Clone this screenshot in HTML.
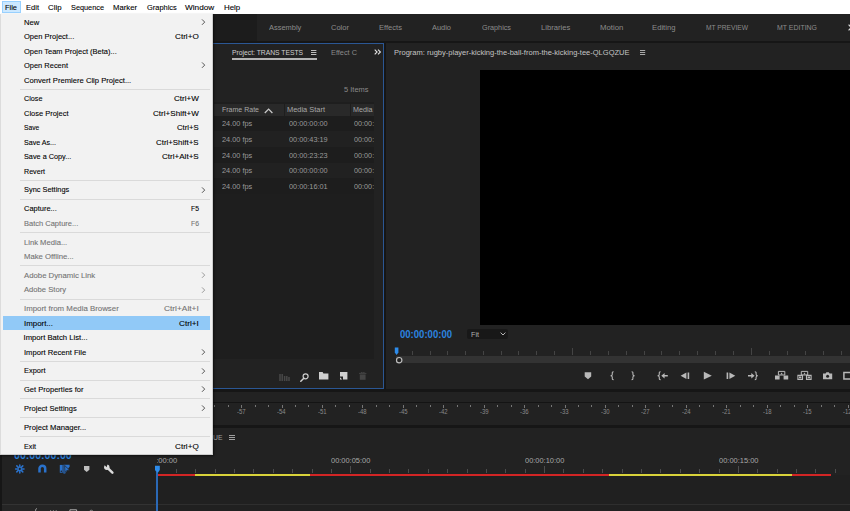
<!DOCTYPE html>
<html><head><meta charset="utf-8"><title>Premiere Pro - File menu</title>
<style>
html,body{margin:0;padding:0;}
body{width:850px;height:511px;overflow:hidden;position:relative;background:#161616;font-family:"Liberation Sans",sans-serif;}
div,span,svg,i{position:absolute;display:block;}
.t{white-space:nowrap;line-height:12px;height:12px;transform-origin:0 50%;}
#stage{left:0;top:0;width:850px;height:511px;overflow:hidden;}
/* menu bar */
#menubar{left:0;top:0;width:850px;height:14px;background:#fff;}
#filehl{left:1.5px;top:0.5px;width:19px;height:12.7px;background:#cce8ff;border:1px solid #99d1ff;box-sizing:border-box;}
/* dropdown */
#menu{left:0;top:14px;width:212.5px;height:440.8px;background:#f2f2f2;box-shadow:inset -1px -1px 0 #cdcdcd, inset 1px 0 0 #dcdcdc, 1px 1px 2px rgba(0,0,0,.55);}
#menu .sep{left:20px;width:189.5px;height:1px;background:#dadada;}
#menu .chev{left:200.6px;}
#menu .t,#menubar .t{-webkit-text-stroke:0.1px currentColor;}
#hl{left:2.5px;top:301.8px;width:207.7px;height:14.3px;background:#91c9f7;}
/* workspace */
#wsbar{left:0;top:14px;width:850px;height:26.7px;background:#222;}
#wsleft{left:0;top:0;width:257px;height:26.7px;background:#1c1c1c;}
/* project panel */
#proj{left:200px;top:42.5px;width:184px;height:346.5px;background:#222;border:1px solid #2b5794;box-sizing:border-box;}
#listbg{left:214px;top:102px;width:160px;height:256.5px;background:#1e1e1e;overflow:hidden;}
#listbg .hdr{left:0;top:1.6px;width:160px;height:12.1px;background:#292929;}
#listbg .row{left:0;width:160px;height:15.65px;}
#listbg .vs{top:1.6px;width:1px;height:12.1px;background:#1e1e1e;}
/* program */
#prog{left:385.7px;top:42.5px;width:470px;height:346.3px;background:#222;}
#video{left:479.7px;top:69.6px;width:380px;height:255.6px;background:#000;}
#fit{left:467px;top:329.3px;width:41px;height:9.8px;background:#181818;border-radius:2px;}
#scroll{left:396px;top:356.4px;width:460px;height:7px;background:#333;}
#ptk i{width:1px;background:#444;}
/* meter */
#meter{left:0;top:392.3px;width:850px;height:32.5px;background:#222;}
#meterline{left:0;top:401.6px;width:850px;height:1.6px;background:#141414;}
#mtk i{top:404.5px;width:1px;background:#767676;}
/* timeline */
#tl{left:0;top:427.5px;width:850px;height:84px;background:#222;}
#tracks{left:157px;top:475px;width:700px;height:40px;background:#202020;}
#tlclip{left:156.5px;top:450px;width:700px;height:30px;overflow:hidden;}
#ttk i{width:1px;background:#4c4c4c;}
.bar{top:473.5px;height:2px;}
</style></head>
<body>
<div id="stage">

<!-- ===== dark application UI ===== -->
<div id="wsbar"><div id="wsleft"></div></div>

<div id="proj"></div>
<div style="left:231.5px;top:58.2px;width:85px;height:1.6px;background:#b4b4b4"></div>
<svg style="left:311px;top:50px" width="6" height="6" viewBox="0 0 6 6"><path d="M0 .5H5.4M0 2.5H5.4M0 4.5H5.4" stroke="#bdbdbd" stroke-width="1"/></svg>
<svg style="left:373.6px;top:48.8px" width="8" height="7" viewBox="0 0 8 7"><path d="M.7 .7 L3.1 3 L.7 5.3M4 .7 L6.4 3 L4 5.3" fill="none" stroke="#e4e4e4" stroke-width="1.1"/></svg>
<div id="listbg">
  <div class="hdr"></div>
  <div class="row" style="top:13.60px;background:#1d1d1d"></div><div class="row" style="top:29.25px;background:#212121"></div><div class="row" style="top:44.90px;background:#1d1d1d"></div><div class="row" style="top:60.55px;background:#212121"></div><div class="row" style="top:76.20px;background:#1d1d1d"></div>
  <div class="vs" style="left:70px"></div><div class="vs" style="left:135.5px"></div>
  <svg style="left:50.4px;top:6.3px" width="10" height="6" viewBox="0 0 10 6"><path d="M.8 5 L4.6 1.1 L8.4 5" fill="none" stroke="#c8c8c8" stroke-width="1.3"/></svg>
  <span class="t" id="t59" style="left:8.00px;top:1.80px;font-size:7.6px;color:#a8a8a8;transform:scaleX(0.9228);">Frame Rate</span>
<span class="t" id="t60" style="left:73.00px;top:1.80px;font-size:7.6px;color:#a8a8a8;transform:scaleX(0.9783);">Media Start</span>
<span class="t" id="t61" style="left:138.50px;top:1.80px;font-size:7.6px;color:#a8a8a8;transform:scaleX(0.9426);">Media</span>
<span class="t" id="t62" style="left:8.40px;top:15.80px;font-size:7.6px;color:#9a9a9a;transform:scaleX(0.9664);">24.00 fps</span>
<span class="t" id="t63" style="left:75.30px;top:15.80px;font-size:7.6px;color:#9a9a9a;transform:scaleX(0.9645);">00:00:00:00</span>
<span class="t" id="t64" style="left:140.40px;top:15.80px;font-size:7.6px;color:#9a9a9a;transform:scaleX(0.9539);">00:00:00</span>
<span class="t" id="t65" style="left:8.40px;top:31.80px;font-size:7.6px;color:#9a9a9a;transform:scaleX(0.9664);">24.00 fps</span>
<span class="t" id="t66" style="left:75.30px;top:31.80px;font-size:7.6px;color:#9a9a9a;transform:scaleX(0.9645);">00:00:43:19</span>
<span class="t" id="t67" style="left:140.40px;top:31.80px;font-size:7.6px;color:#9a9a9a;transform:scaleX(0.9539);">00:00:00</span>
<span class="t" id="t68" style="left:8.40px;top:47.80px;font-size:7.6px;color:#9a9a9a;transform:scaleX(0.9664);">24.00 fps</span>
<span class="t" id="t69" style="left:75.30px;top:47.80px;font-size:7.6px;color:#9a9a9a;transform:scaleX(0.9645);">00:00:23:23</span>
<span class="t" id="t70" style="left:140.40px;top:47.80px;font-size:7.6px;color:#9a9a9a;transform:scaleX(0.9539);">00:00:00</span>
<span class="t" id="t71" style="left:8.40px;top:62.80px;font-size:7.6px;color:#9a9a9a;transform:scaleX(0.9664);">24.00 fps</span>
<span class="t" id="t72" style="left:75.30px;top:62.80px;font-size:7.6px;color:#9a9a9a;transform:scaleX(0.9645);">00:00:00:00</span>
<span class="t" id="t73" style="left:140.40px;top:62.80px;font-size:7.6px;color:#9a9a9a;transform:scaleX(0.9539);">00:00:00</span>
<span class="t" id="t74" style="left:8.40px;top:78.80px;font-size:7.6px;color:#9a9a9a;transform:scaleX(0.9664);">24.00 fps</span>
<span class="t" id="t75" style="left:75.30px;top:78.80px;font-size:7.6px;color:#9a9a9a;transform:scaleX(0.9645);">00:00:16:01</span>
<span class="t" id="t76" style="left:140.40px;top:78.80px;font-size:7.6px;color:#9a9a9a;transform:scaleX(0.9539);">00:00:00</span>
</div>
<!-- project footer icons -->
<svg style="left:278.5px;top:373.5px" width="12" height="7" viewBox="0 0 12 7"><path d="M1 0V7M3.2 0V7M5.6 2V7M7.8 2V7M10 3V7" stroke="#484848" stroke-width="1.5"/></svg>
<svg style="left:299.5px;top:372.5px" width="9" height="9" viewBox="0 0 9 9"><circle cx="5.6" cy="3.3" r="2.5" fill="none" stroke="#cfcfcf" stroke-width="1.2"/><path d="M3.8 5.2 L.8 8.2" stroke="#cfcfcf" stroke-width="1.5" stroke-linecap="round"/></svg>
<svg style="left:318.7px;top:372.3px" width="10" height="8" viewBox="0 0 10 8"><path d="M0 0H3.6L4.4 1.4H9.4V7.4H0Z" fill="#cfcfcf"/></svg>
<svg style="left:339.7px;top:372.3px" width="8" height="8" viewBox="0 0 8 8"><path d="M0 0H7.4V7.4H3V4.4H0Z" fill="#cfcfcf"/><path d="M0 5.2L2.2 7.4H0Z" fill="#cfcfcf"/></svg>
<svg style="left:358.8px;top:372.3px" width="8" height="8" viewBox="0 0 8 8"><path d="M0 1.4H7.4M2.4 1V0H5V1" stroke="#444" stroke-width="1" fill="none"/><path d="M.8 2.4H6.6V7.8H.8Z" fill="#444"/></svg>

<div id="prog"></div>
<svg style="left:640px;top:50px" width="6" height="6" viewBox="0 0 6 6"><path d="M0 .5H5.2M0 2.5H5.2M0 4.5H5.2" stroke="#a8a8a8" stroke-width="1"/></svg>
<div id="video"></div>
<svg style="left:848.4px;top:23.6px" width="4" height="7" viewBox="0 0 4 7"><path d="M.6 .6L3.2 3.5L.6 6.4" fill="none" stroke="#e0e0e0" stroke-width="1.1"/></svg>
<div id="fit"></div>
<svg style="left:499.5px;top:332.3px" width="6" height="4" viewBox="0 0 6 4"><path d="M.6 .6 L3 3 L5.4 .6" fill="none" stroke="#b8b8b8" stroke-width="1"/></svg>
<div id="ptk"><i style="left:411.78px;top:351.2px;height:4.3px"></i><i style="left:429.56px;top:351.2px;height:4.3px"></i><i style="left:447.34px;top:351.2px;height:4.3px"></i><i style="left:465.12px;top:351.2px;height:4.3px"></i><i style="left:482.90px;top:351.2px;height:4.3px"></i><i style="left:500.68px;top:351.2px;height:4.3px"></i><i style="left:518.46px;top:351.2px;height:4.3px"></i><i style="left:536.24px;top:351.2px;height:4.3px"></i><i style="left:554.02px;top:351.2px;height:4.3px"></i><i style="left:571.80px;top:348.3px;height:7.2px"></i><i style="left:589.73px;top:351.2px;height:4.3px"></i><i style="left:607.66px;top:351.2px;height:4.3px"></i><i style="left:625.59px;top:351.2px;height:4.3px"></i><i style="left:643.52px;top:351.2px;height:4.3px"></i><i style="left:661.45px;top:351.2px;height:4.3px"></i><i style="left:679.38px;top:351.2px;height:4.3px"></i><i style="left:697.31px;top:351.2px;height:4.3px"></i><i style="left:715.24px;top:351.2px;height:4.3px"></i><i style="left:733.17px;top:351.2px;height:4.3px"></i><i style="left:751.10px;top:348.3px;height:7.2px"></i><i style="left:769.03px;top:351.2px;height:4.3px"></i><i style="left:786.96px;top:351.2px;height:4.3px"></i><i style="left:804.89px;top:351.2px;height:4.3px"></i><i style="left:822.82px;top:351.2px;height:4.3px"></i><i style="left:840.75px;top:351.2px;height:4.3px"></i><i style="left:858.68px;top:351.2px;height:4.3px"></i></div>
<div id="scroll"></div>
<svg style="left:393.6px;top:346.6px" width="6" height="9" viewBox="0 0 6 9"><path d="M.8 .4H4.4V5.6L2.6 8L.8 5.6Z" fill="#2d8ceb"/></svg>
<svg style="left:394.5px;top:356px" width="9" height="9" viewBox="0 0 9 9"><circle cx="4.2" cy="4.2" r="2.7" fill="#222" stroke="#bdbdbd" stroke-width="1.2"/></svg>
<!-- transport -->
<svg style="left:580px;top:369px" width="270" height="14" viewBox="580 369 270 14" fill="#b8b8b8" stroke="none">
  <path d="M584.7 372.3H591.2V376.6L588 379.2L584.7 376.6Z"/>
  <path d="M613.6 371.8C612 371.8 612.3 372.6 612.3 374.2C612.3 375.2 611.6 375.6 610.6 375.7C611.6 375.8 612.3 376.2 612.3 377.2C612.3 378.8 612 379.6 613.6 379.6" fill="none" stroke="#b8b8b8" stroke-width="1.1"/>
  <path d="M631.6 371.8C633.2 371.8 632.9 372.6 632.9 374.2C632.9 375.2 633.6 375.6 634.6 375.7C633.6 375.8 632.9 376.2 632.9 377.2C632.9 378.8 633.2 379.6 631.6 379.6" fill="none" stroke="#b8b8b8" stroke-width="1.1"/>
  <path d="M660.6 371.8C659 371.8 659.3 372.6 659.3 374.2C659.3 375.2 658.6 375.6 657.6 375.7C658.6 375.8 659.3 376.2 659.3 377.2C659.3 378.8 659 379.6 660.6 379.6" fill="none" stroke="#b8b8b8" stroke-width="1.1"/>
  <path d="M661.3 375.7L664.6 373V375H667.8V376.4H664.6V378.4Z"/>
  <path d="M680.6 375.7L686.4 372.4V379Z M687.6 372.4H689.2V379H687.6Z"/>
  <path d="M703.8 371.8L711.8 375.7L703.8 379.6Z"/>
  <path d="M726.6 372.4H728.2V379H726.6Z M729.4 372.4L735.3 375.7L729.4 379Z"/>
  <path d="M754.8 371.8C756.4 371.8 756.1 372.6 756.1 374.2C756.1 375.2 756.8 375.6 757.8 375.7C756.8 375.8 756.1 376.2 756.1 377.2C756.1 378.8 756.4 379.6 754.8 379.6" fill="none" stroke="#b8b8b8" stroke-width="1.1"/>
  <path d="M754.6 375.7L751.3 373V375H748V376.4H751.3V378.4Z"/>
  <!-- lift -->
  <path d="M775 375.4H779.6V379.4H775Z M783.6 375.4H788.2V379.4H783.6Z"/>
  <path d="M778.4 371.4H784.8V375H778.4Z" fill="none" stroke="#b8b8b8" stroke-width="1"/>
  <path d="M780.4 374.4L781.6 372.4L782.8 374.4Z"/>
  <!-- extract -->
  <path d="M797.9 375.4H802.5V379.4H797.9Z M806.5 375.4H811.1V379.4H806.5Z" fill="none" stroke="#b8b8b8" stroke-width="1.1"/>
  <path d="M801.3 371.4H807.7V375H801.3Z" fill="none" stroke="#b8b8b8" stroke-width="1"/>
  <path d="M803.3 374.4L804.5 372.4L805.7 374.4Z"/>
  <path d="M799 376.6H801.4V378.2H799Z M807.6 376.6H810V378.2H807.6Z"/>
  <!-- camera -->
  <path d="M823 373.4H825.6L826.4 372.2H828.8L829.6 373.4H832.2V379.2H823Z"/>
  <circle cx="827.6" cy="376.2" r="1.5" fill="#222"/>
  <path d="M843.9 372.6H851V379H843.9Z" fill="none" stroke="#b8b8b8" stroke-width="1.5"/>
</svg>

<!-- audio meter strip -->
<div id="meter"></div>
<div id="meterline"></div>
<div id="mtk"><i style="left:214.15px;height:2px"></i><i style="left:227.62px;height:2px"></i><i style="left:241.10px;height:3px"></i><i style="left:254.58px;height:2px"></i><i style="left:268.05px;height:2px"></i><i style="left:281.53px;height:3px"></i><i style="left:295.01px;height:2px"></i><i style="left:308.48px;height:2px"></i><i style="left:321.96px;height:3px"></i><i style="left:335.44px;height:2px"></i><i style="left:348.91px;height:2px"></i><i style="left:362.39px;height:3px"></i><i style="left:375.87px;height:2px"></i><i style="left:389.34px;height:2px"></i><i style="left:402.82px;height:3px"></i><i style="left:416.30px;height:2px"></i><i style="left:429.77px;height:2px"></i><i style="left:443.25px;height:3px"></i><i style="left:456.73px;height:2px"></i><i style="left:470.20px;height:2px"></i><i style="left:483.68px;height:3px"></i><i style="left:497.16px;height:2px"></i><i style="left:510.63px;height:2px"></i><i style="left:524.11px;height:3px"></i><i style="left:537.59px;height:2px"></i><i style="left:551.06px;height:2px"></i><i style="left:564.54px;height:3px"></i><i style="left:578.02px;height:2px"></i><i style="left:591.49px;height:2px"></i><i style="left:604.97px;height:3px"></i><i style="left:618.45px;height:2px"></i><i style="left:631.92px;height:2px"></i><i style="left:645.40px;height:3px"></i><i style="left:658.88px;height:2px"></i><i style="left:672.35px;height:2px"></i><i style="left:685.83px;height:3px"></i><i style="left:699.31px;height:2px"></i><i style="left:712.78px;height:2px"></i><i style="left:726.26px;height:3px"></i><i style="left:739.74px;height:2px"></i><i style="left:753.21px;height:2px"></i><i style="left:766.69px;height:3px"></i><i style="left:780.17px;height:2px"></i><i style="left:793.64px;height:2px"></i><i style="left:807.12px;height:3px"></i><i style="left:820.60px;height:2px"></i><i style="left:834.07px;height:2px"></i><i style="left:847.55px;height:3px"></i></div>

<!-- timeline -->
<div id="tl"></div>
<div id="tracks"></div>
<div style="left:0;top:503.5px;width:157px;height:1px;background:#333"></div>
<div style="left:0;top:504.5px;width:157px;height:7px;background:#252525"></div>
<div style="left:0;top:427.5px;width:1.7px;height:84px;background:#161616"></div>
<div style="left:157px;top:503.5px;width:700px;height:1px;background:#2e2e2e"></div>
<svg style="left:229px;top:435px" width="7" height="6" viewBox="0 0 7 6"><path d="M0 .5H6M0 2.5H6M0 4.5H6" stroke="#a0a0a0" stroke-width="1"/></svg>
<div id="ttk"><i style="left:175.88px;top:468.5px;height:4.5px"></i><i style="left:195.26px;top:468.5px;height:4.5px"></i><i style="left:214.64px;top:468.5px;height:4.5px"></i><i style="left:234.02px;top:468.5px;height:4.5px"></i><i style="left:253.40px;top:468.5px;height:4.5px"></i><i style="left:272.78px;top:468.5px;height:4.5px"></i><i style="left:292.16px;top:468.5px;height:4.5px"></i><i style="left:311.54px;top:468.5px;height:4.5px"></i><i style="left:330.92px;top:468.5px;height:4.5px"></i><i style="left:350.30px;top:465.5px;height:7.5px"></i><i style="left:369.68px;top:468.5px;height:4.5px"></i><i style="left:389.06px;top:468.5px;height:4.5px"></i><i style="left:408.44px;top:468.5px;height:4.5px"></i><i style="left:427.82px;top:468.5px;height:4.5px"></i><i style="left:447.20px;top:468.5px;height:4.5px"></i><i style="left:466.58px;top:468.5px;height:4.5px"></i><i style="left:485.96px;top:468.5px;height:4.5px"></i><i style="left:505.34px;top:468.5px;height:4.5px"></i><i style="left:524.72px;top:468.5px;height:4.5px"></i><i style="left:544.10px;top:465.5px;height:7.5px"></i><i style="left:563.48px;top:468.5px;height:4.5px"></i><i style="left:582.86px;top:468.5px;height:4.5px"></i><i style="left:602.24px;top:468.5px;height:4.5px"></i><i style="left:621.62px;top:468.5px;height:4.5px"></i><i style="left:641.00px;top:468.5px;height:4.5px"></i><i style="left:660.38px;top:468.5px;height:4.5px"></i><i style="left:679.76px;top:468.5px;height:4.5px"></i><i style="left:699.14px;top:468.5px;height:4.5px"></i><i style="left:718.52px;top:468.5px;height:4.5px"></i><i style="left:737.90px;top:465.5px;height:7.5px"></i><i style="left:757.28px;top:468.5px;height:4.5px"></i><i style="left:776.66px;top:468.5px;height:4.5px"></i><i style="left:796.04px;top:468.5px;height:4.5px"></i><i style="left:815.42px;top:468.5px;height:4.5px"></i><i style="left:834.80px;top:468.5px;height:4.5px"></i></div>
<div class="bar" style="left:157px;width:674px;background:#d22525"></div>
<div class="bar" style="left:195px;width:114.7px;background:#d8d23a"></div>
<div class="bar" style="left:608.5px;width:183px;background:#d8d23a"></div>
<div style="left:156.4px;top:472px;width:1.2px;height:40px;background:#2b69b6"></div>
<svg style="left:153.6px;top:465.4px" width="7" height="9" viewBox="0 0 7 9"><path d="M1 .8H5.8V5L4 7.6H2.8L1 5Z" fill="#2d8ceb"/></svg>
<!-- timeline tool icons -->
<svg style="left:14px;top:463px" width="102" height="12" viewBox="14 463 102 12">
  <g stroke="#2a72cc" stroke-width="1.5" fill="none" stroke-linecap="round">
    <path d="M19.8 464.9V472.9M15.6 468.9H24M16.8 465.9L22.8 471.9M22.8 465.9L16.8 471.9"/>
  </g>
  <circle cx="19.8" cy="468.9" r="1.1" fill="#222"/>
  <path d="M39.5 472.5V468.6A2.85 2.85 0 0 1 45.2 468.6V472.5" fill="none" stroke="#2a72cc" stroke-width="2.5"/>
  <path d="M59.8 464.9H62.7V472.7H59.8Z" fill="#2a72cc"/>
  <path d="M63.4 464.8H69.6V466.4L65.2 473.4H63.4Z" fill="#2a72cc"/><path d="M64.6 465.4L69.6 470.2L66.8 470.4L65 472.6Z" fill="#2a72cc" stroke="#222" stroke-width=".7"/><circle cx="61.3" cy="471.3" r=".8" fill="#222"/>
  <path d="M84 466H89.4V469.8L86.7 472.1L84 469.8Z" fill="#c0c0c0"/>
  <path d="M107 467.4L112.4 472.6" stroke="#dcdcdc" stroke-width="2.5" stroke-linecap="round" fill="none"/><circle cx="106.8" cy="467.3" r="2.7" fill="#dcdcdc"/><path d="M103.4 464L106.7 467.2L107.6 463.4Z" fill="#222"/>
</svg>
<!-- bottom cut-off icons -->
<svg style="left:30px;top:507px" width="70" height="5" viewBox="30 507 70 5" fill="none" stroke="#a0a0a0" stroke-width="1">
  <path d="M37 508.7C35.4 508.7 35.6 509.8 35.6 511"/>
  <path d="M50.6 510.2V511M53.4 510.2V511M56.2 510.2V511" stroke="#8a8a8a"/>
  <path d="M69.9 511V509.8H76.6V511" stroke="#b0b0b0"/>
  <path d="M89.6 511.4A1.8 1.8 0 0 1 93 511.4" stroke="#8a8a8a"/>
</svg>

<span class="t" id="t46" style="left:268.90px;top:21.80px;font-size:7.8px;color:#8c8c8c;transform:scaleX(0.9557);">Assembly</span>
<span class="t" id="t47" style="left:331.00px;top:21.80px;font-size:7.8px;color:#8c8c8c;transform:scaleX(0.9656);">Color</span>
<span class="t" id="t48" style="left:379.00px;top:21.80px;font-size:7.8px;color:#8c8c8c;transform:scaleX(0.9703);">Effects</span>
<span class="t" id="t49" style="left:432.00px;top:21.80px;font-size:7.8px;color:#8c8c8c;transform:scaleX(0.9522);">Audio</span>
<span class="t" id="t50" style="left:482.00px;top:21.80px;font-size:7.8px;color:#8c8c8c;transform:scaleX(0.9294);">Graphics</span>
<span class="t" id="t51" style="left:540.70px;top:21.80px;font-size:7.8px;color:#8c8c8c;transform:scaleX(0.9797);">Libraries</span>
<span class="t" id="t52" style="left:599.70px;top:21.80px;font-size:7.8px;color:#8c8c8c;transform:scaleX(0.9955);">Motion</span>
<span class="t" id="t53" style="left:651.50px;top:21.80px;font-size:7.8px;color:#8c8c8c;transform:scaleX(0.9856);">Editing</span>
<span class="t" id="t54" style="left:705.50px;top:21.80px;font-size:7.8px;color:#8c8c8c;transform:scaleX(0.8528);">MT PREVIEW</span>
<span class="t" id="t55" style="left:776.50px;top:21.80px;font-size:7.8px;color:#8c8c8c;transform:scaleX(0.8907);">MT EDITING</span>
<span class="t" id="t56" style="left:231.80px;top:46.80px;font-size:7.8px;color:#d0d0d0;transform:scaleX(0.8666);">Project: TRANS TESTS</span>
<span class="t" id="t57" style="left:331.00px;top:46.80px;font-size:7.8px;color:#8a8a8a;transform:scaleX(0.9422);">Effect C</span>
<span class="t" id="t58" style="left:344.00px;top:83.80px;font-size:7.6px;color:#8a8a8a;transform:scaleX(0.9837);">5 Items</span>
<span class="t" id="t77" style="left:393.80px;top:46.80px;font-size:7.8px;color:#c4c4c4;transform:scaleX(0.9637);">Program: rugby-player-kicking-the-ball-from-the-kicking-tee-QLGQZUE</span>
<span class="t" id="t78" style="left:400.00px;top:328.30px;font-size:10.6px;color:#2b84e0;transform:scaleX(0.9009);font-weight:bold;">00:00:00:00</span>
<span class="t" id="t79" style="left:470.50px;top:328.80px;font-size:7.4px;color:#b0b0b0;transform:scaleX(0.9734);">Fit</span>
<span class="t" id="t80" style="left:237.00px;top:405.80px;font-size:6.6px;color:#8a8a8a;transform:scaleX(0.9023);">-57</span>
<span class="t" id="t81" style="left:277.43px;top:405.80px;font-size:6.6px;color:#8a8a8a;transform:scaleX(0.9023);">-54</span>
<span class="t" id="t82" style="left:317.86px;top:405.80px;font-size:6.6px;color:#8a8a8a;transform:scaleX(0.9023);">-51</span>
<span class="t" id="t83" style="left:358.29px;top:405.80px;font-size:6.6px;color:#8a8a8a;transform:scaleX(0.9023);">-48</span>
<span class="t" id="t84" style="left:398.72px;top:405.80px;font-size:6.6px;color:#8a8a8a;transform:scaleX(0.9023);">-45</span>
<span class="t" id="t85" style="left:439.15px;top:405.80px;font-size:6.6px;color:#8a8a8a;transform:scaleX(0.9023);">-42</span>
<span class="t" id="t86" style="left:479.58px;top:405.80px;font-size:6.6px;color:#8a8a8a;transform:scaleX(0.9023);">-39</span>
<span class="t" id="t87" style="left:520.01px;top:405.80px;font-size:6.6px;color:#8a8a8a;transform:scaleX(0.9023);">-36</span>
<span class="t" id="t88" style="left:560.44px;top:405.80px;font-size:6.6px;color:#8a8a8a;transform:scaleX(0.9023);">-33</span>
<span class="t" id="t89" style="left:600.87px;top:405.80px;font-size:6.6px;color:#8a8a8a;transform:scaleX(0.9023);">-30</span>
<span class="t" id="t90" style="left:641.30px;top:405.80px;font-size:6.6px;color:#8a8a8a;transform:scaleX(0.9023);">-27</span>
<span class="t" id="t91" style="left:681.73px;top:405.80px;font-size:6.6px;color:#8a8a8a;transform:scaleX(0.9023);">-24</span>
<span class="t" id="t92" style="left:722.16px;top:405.80px;font-size:6.6px;color:#8a8a8a;transform:scaleX(0.9023);">-21</span>
<span class="t" id="t93" style="left:762.59px;top:405.80px;font-size:6.6px;color:#8a8a8a;transform:scaleX(0.9023);">-18</span>
<span class="t" id="t94" style="left:803.02px;top:405.80px;font-size:6.6px;color:#8a8a8a;transform:scaleX(0.9023);">-15</span>
<span class="t" id="t95" style="left:843.45px;top:405.80px;font-size:6.6px;color:#8a8a8a;transform:scaleX(0.9023);">-12</span>
<span class="t" id="t96" style="left:212.50px;top:431.80px;font-size:7.8px;color:#a0a0a0;transform:scaleX(0.8761);">UE</span>
<span class="t" id="t97" style="left:331.00px;top:454.80px;font-size:7.6px;color:#a8a8a8;transform:scaleX(0.9794);">00:00:05:00</span>
<span class="t" id="t98" style="left:525.00px;top:454.80px;font-size:7.6px;color:#a8a8a8;transform:scaleX(0.9794);">00:00:10:00</span>
<span class="t" id="t99" style="left:719.00px;top:454.80px;font-size:7.6px;color:#a8a8a8;transform:scaleX(0.9844);">00:00:15:00</span>
<span class="t" id="t100" style="left:14.30px;top:449.30px;font-size:10.8px;color:#2b84e0;transform:scaleX(0.9808);font-weight:bold;">00:00:00:00</span>
<div id="tlclip">
<span class="t" style="left:-19.2px;top:4.5px;font-size:7.6px;color:#a8a8a8;letter-spacing:-0.02px">00:00:00:00</span>
</div>

<!-- ===== Windows menu bar + dropdown ===== -->
<div id="menubar"><div id="filehl"></div>
<span class="t" id="t0" style="left:5.00px;top:1.80px;font-size:7.7px;color:#000;transform:scaleX(0.9685);">File</span>
<span class="t" id="t1" style="left:25.75px;top:1.80px;font-size:7.7px;color:#000;transform:scaleX(0.9811);">Edit</span>
<span class="t" id="t2" style="left:48.00px;top:1.80px;font-size:7.7px;color:#000;transform:scaleX(1.0189);">Clip</span>
<span class="t" id="t3" style="left:70.75px;top:1.80px;font-size:7.7px;color:#000;transform:scaleX(0.9531);">Sequence</span>
<span class="t" id="t4" style="left:113.25px;top:1.80px;font-size:7.7px;color:#000;transform:scaleX(1.0033);">Marker</span>
<span class="t" id="t5" style="left:146.50px;top:1.80px;font-size:7.7px;color:#000;transform:scaleX(0.9670);">Graphics</span>
<span class="t" id="t6" style="left:185.25px;top:1.80px;font-size:7.7px;color:#000;transform:scaleX(1.0697);">Window</span>
<span class="t" id="t7" style="left:223.75px;top:1.80px;font-size:7.7px;color:#000;transform:scaleX(1.0277);">Help</span>
</div>
<div id="menu">
<div id="hl"></div>
<div class="sep" style="top:74.73px"></div>
<div class="sep" style="top:165.78px"></div>
<div class="sep" style="top:184.63px"></div>
<div class="sep" style="top:217.92px"></div>
<div class="sep" style="top:251.21px"></div>
<div class="sep" style="top:284.50px"></div>
<div class="sep" style="top:346.68px"></div>
<div class="sep" style="top:365.53px"></div>
<div class="sep" style="top:384.38px"></div>
<div class="sep" style="top:403.23px"></div>
<div class="sep" style="top:422.08px"></div>
<svg class="chev" style="top:4.05px" width="5" height="8" viewBox="0 0 5 8"><path d="M1 1.4 L3.7 4.1 L1 6.8" fill="none" stroke="#555" stroke-width="1"/></svg>
<svg class="chev" style="top:47.37px" width="5" height="8" viewBox="0 0 5 8"><path d="M1 1.4 L3.7 4.1 L1 6.8" fill="none" stroke="#555" stroke-width="1"/></svg>
<svg class="chev" style="top:171.71px" width="5" height="8" viewBox="0 0 5 8"><path d="M1 1.4 L3.7 4.1 L1 6.8" fill="none" stroke="#555" stroke-width="1"/></svg>
<svg class="chev" style="top:257.14px" width="5" height="8" viewBox="0 0 5 8"><path d="M1 1.4 L3.7 4.1 L1 6.8" fill="none" stroke="#9a9a9a" stroke-width="1"/></svg>
<svg class="chev" style="top:271.58px" width="5" height="8" viewBox="0 0 5 8"><path d="M1 1.4 L3.7 4.1 L1 6.8" fill="none" stroke="#9a9a9a" stroke-width="1"/></svg>
<svg class="chev" style="top:333.75px" width="5" height="8" viewBox="0 0 5 8"><path d="M1 1.4 L3.7 4.1 L1 6.8" fill="none" stroke="#555" stroke-width="1"/></svg>
<svg class="chev" style="top:352.60px" width="5" height="8" viewBox="0 0 5 8"><path d="M1 1.4 L3.7 4.1 L1 6.8" fill="none" stroke="#555" stroke-width="1"/></svg>
<svg class="chev" style="top:371.45px" width="5" height="8" viewBox="0 0 5 8"><path d="M1 1.4 L3.7 4.1 L1 6.8" fill="none" stroke="#555" stroke-width="1"/></svg>
<svg class="chev" style="top:390.30px" width="5" height="8" viewBox="0 0 5 8"><path d="M1 1.4 L3.7 4.1 L1 6.8" fill="none" stroke="#555" stroke-width="1"/></svg>
<span class="t" id="t8" style="left:23.50px;top:2.80px;font-size:7.7px;color:#000;transform:scaleX(0.9909);">New</span>
<span class="t" id="t9" style="left:23.50px;top:16.80px;font-size:7.7px;color:#000;transform:scaleX(0.9799);">Open Project...</span>
<span class="t" id="t10" style="left:175.00px;top:16.80px;font-size:7.7px;color:#000;transform:scaleX(1.0585);">Ctrl+O</span>
<span class="t" id="t11" style="left:23.50px;top:31.80px;font-size:7.7px;color:#000;transform:scaleX(0.9749);">Open Team Project (Beta)...</span>
<span class="t" id="t12" style="left:23.50px;top:45.80px;font-size:7.7px;color:#000;transform:scaleX(0.9710);">Open Recent</span>
<span class="t" id="t13" style="left:23.50px;top:60.80px;font-size:7.7px;color:#000;transform:scaleX(0.9922);">Convert Premiere Clip Project...</span>
<span class="t" id="t14" style="left:23.50px;top:78.80px;font-size:7.7px;color:#000;transform:scaleX(0.9412);">Close</span>
<span class="t" id="t15" style="left:173.75px;top:78.80px;font-size:7.7px;color:#000;transform:scaleX(1.0547);">Ctrl+W</span>
<span class="t" id="t16" style="left:23.50px;top:93.80px;font-size:7.7px;color:#000;transform:scaleX(0.9733);">Close Project</span>
<span class="t" id="t17" style="left:153.00px;top:93.80px;font-size:7.7px;color:#000;transform:scaleX(1.0498);">Ctrl+Shift+W</span>
<span class="t" id="t18" style="left:23.50px;top:107.80px;font-size:7.7px;color:#000;transform:scaleX(0.8699);">Save</span>
<span class="t" id="t19" style="left:177.00px;top:107.80px;font-size:7.7px;color:#000;transform:scaleX(1.0080);">Ctrl+S</span>
<span class="t" id="t20" style="left:23.50px;top:122.80px;font-size:7.7px;color:#000;transform:scaleX(0.9242);">Save As...</span>
<span class="t" id="t21" style="left:156.25px;top:122.80px;font-size:7.7px;color:#000;transform:scaleX(1.0253);">Ctrl+Shift+S</span>
<span class="t" id="t22" style="left:23.50px;top:136.80px;font-size:7.7px;color:#000;transform:scaleX(0.9477);">Save a Copy...</span>
<span class="t" id="t23" style="left:162.00px;top:136.80px;font-size:7.7px;color:#000;transform:scaleX(1.0486);">Ctrl+Alt+S</span>
<span class="t" id="t24" style="left:23.50px;top:151.80px;font-size:7.7px;color:#000;transform:scaleX(0.9269);">Revert</span>
<span class="t" id="t25" style="left:23.50px;top:169.80px;font-size:7.7px;color:#000;transform:scaleX(0.9624);">Sync Settings</span>
<span class="t" id="t26" style="left:23.50px;top:188.80px;font-size:7.7px;color:#000;transform:scaleX(0.9699);">Capture...</span>
<span class="t" id="t27" style="left:190.75px;top:188.80px;font-size:7.7px;color:#000;transform:scaleX(0.8904);">F5</span>
<span class="t" id="t28" style="left:23.50px;top:203.80px;font-size:7.7px;color:#737373;transform:scaleX(0.9764);">Batch Capture...</span>
<span class="t" id="t29" style="left:190.75px;top:203.80px;font-size:7.7px;color:#737373;transform:scaleX(0.8904);">F6</span>
<span class="t" id="t30" style="left:23.50px;top:222.80px;font-size:7.7px;color:#737373;transform:scaleX(0.9921);">Link Media...</span>
<span class="t" id="t31" style="left:23.50px;top:236.80px;font-size:7.7px;color:#737373;transform:scaleX(1.0066);">Make Offline...</span>
<span class="t" id="t32" style="left:23.50px;top:255.80px;font-size:7.7px;color:#737373;transform:scaleX(1.0104);">Adobe Dynamic Link</span>
<span class="t" id="t33" style="left:23.50px;top:269.80px;font-size:7.7px;color:#737373;transform:scaleX(0.9926);">Adobe Story</span>
<span class="t" id="t34" style="left:23.50px;top:288.80px;font-size:7.7px;color:#737373;transform:scaleX(1.0221);">Import from Media Browser</span>
<span class="t" id="t35" style="left:164.00px;top:288.80px;font-size:7.7px;color:#737373;transform:scaleX(1.0843);">Ctrl+Alt+I</span>
<span class="t" id="t36" style="left:23.50px;top:303.80px;font-size:7.7px;color:#000;transform:scaleX(1.0283);">Import...</span>
<span class="t" id="t37" style="left:179.00px;top:303.80px;font-size:7.7px;color:#000;transform:scaleX(1.0622);">Ctrl+I</span>
<span class="t" id="t38" style="left:23.50px;top:317.80px;font-size:7.7px;color:#000;">Import Batch List...</span>
<span class="t" id="t39" style="left:23.50px;top:332.80px;font-size:7.7px;color:#000;transform:scaleX(0.9910);">Import Recent File</span>
<span class="t" id="t40" style="left:23.50px;top:350.80px;font-size:7.7px;color:#000;transform:scaleX(0.9677);">Export</span>
<span class="t" id="t41" style="left:23.50px;top:369.80px;font-size:7.7px;color:#000;transform:scaleX(0.9807);">Get Properties for</span>
<span class="t" id="t42" style="left:23.50px;top:388.80px;font-size:7.7px;color:#000;transform:scaleX(0.9797);">Project Settings</span>
<span class="t" id="t43" style="left:23.50px;top:407.80px;font-size:7.7px;color:#000;transform:scaleX(0.9977);">Project Manager...</span>
<span class="t" id="t44" style="left:23.50px;top:426.80px;font-size:7.7px;color:#000;transform:scaleX(0.9354);">Exit</span>
<span class="t" id="t45" style="left:175.00px;top:426.80px;font-size:7.7px;color:#000;transform:scaleX(1.0585);">Ctrl+Q</span>
</div>

</div>
</body></html>
